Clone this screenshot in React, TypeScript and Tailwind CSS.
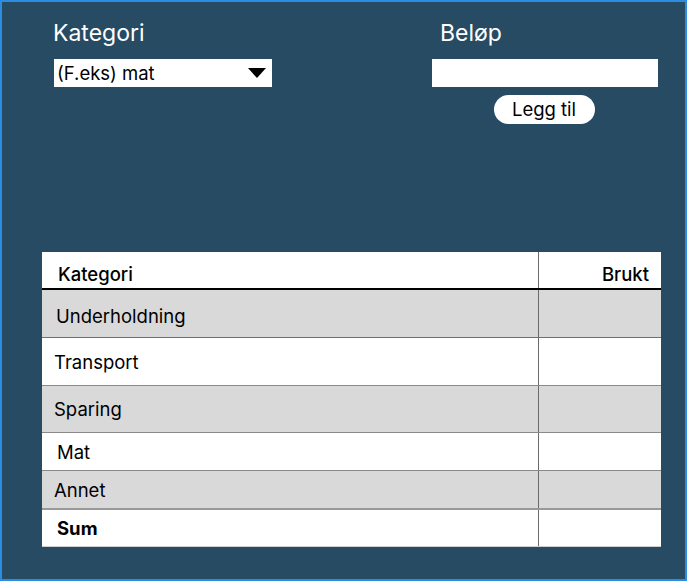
import React from 'react';

const ROWS = [
  { name: 'Underholdning', h: 'h-[47px]', pl: 'pl-[14px]', pt: 'pt-[7px]', bg: 'bg-[#d9d9d9]', border: 'border-b border-[#6f6f6f]' },
  { name: 'Transport', h: 'h-[47px]', pl: 'pl-[12px]', pt: 'pt-[2px]', bg: 'bg-white', border: 'border-b border-[#8a8a8a]' },
  { name: 'Sparing', h: 'h-[46px]', pl: 'pl-[12px]', pt: 'pt-[2px]', bg: 'bg-[#d9d9d9]', border: 'border-b border-[#8a8a8a]' },
  { name: 'Mat', h: 'h-[37px]', pl: 'pl-[15px]', pt: 'pt-[3px]', bg: 'bg-white', border: 'border-b border-[#8a8a8a]' },
  { name: 'Annet', h: 'h-[37px]', pl: 'pl-[12px]', pt: 'pt-[3px]', bg: 'bg-[#d9d9d9]', border: 'border-b-2 border-[#999999]' },
];

const App: React.FC = () => {
  return (
    <div className="w-[687px] h-[581px] border-2 border-[#2b8de2] bg-[#274b62] font-['Inter',sans-serif] text-black">
      {/* form */}
      <div className="flex pt-[17px]">
        <div className="ml-[52px] w-[218px]">
          <div className="text-[23px] leading-[28px] text-white -ml-[1px]">Kategori</div>
          <div className="mt-3 h-[28px] bg-white flex items-center justify-between pl-[3px] pr-[6px]">
            <span className="text-[18.5px] leading-none pt-[1px]">(F.eks) mat</span>
            <svg width="18" height="10" viewBox="0 0 18 10">
              <path d="M0 0 L18 0 L9 10 Z" fill="#000" />
            </svg>
          </div>
        </div>
        <div className="ml-[160px] w-[226px] flex flex-col">
          <div className="text-[23px] leading-[28px] text-white pl-2">Beløp</div>
          <input className="mt-3 h-[28px] bg-white outline-none px-2 text-[18px]" />
          <button className="mt-2 self-center w-[101px] h-[29px] rounded-full bg-white text-[18.5px] leading-none -translate-x-[1px]">
            Legg til
          </button>
        </div>
      </div>

      {/* table */}
      <div className="ml-[40px] mt-[128px] w-[619px]">
        <div className="flex h-[38px] bg-white border-b-2 border-black">
          <div className="flex-1 flex items-end pb-[5px] pl-[16px] text-[18.5px] font-medium leading-none">Kategori</div>
          <div className="w-[123px] border-l border-[#6b6b6b] flex items-end justify-end pb-[5px] pr-[12px] text-[18.5px] font-medium leading-none">
            Brukt
          </div>
        </div>
        {ROWS.map((r) => (
          <div key={r.name} className={`flex ${r.h} ${r.bg} ${r.border} box-content`}>
            <div className={`flex-1 flex items-center ${r.pl} ${r.pt} text-[18.5px]`}>{r.name}</div>
            <div className="w-[123px] border-l border-[#6b6b6b]" />
          </div>
        ))}
        <div className="flex h-[36px] bg-white border-b border-[#cfcfcf] box-content">
          <div className="flex-1 flex items-center pl-[15px] pt-[2px] text-[18.5px] font-bold">Sum</div>
          <div className="w-[123px] border-l border-[#6b6b6b]" />
        </div>
      </div>
    </div>
  );
};

export default App;
